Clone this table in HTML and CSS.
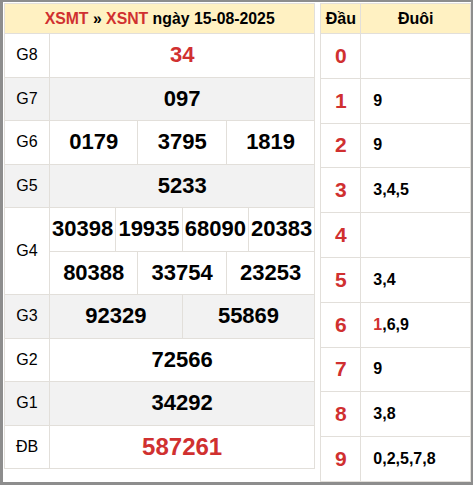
FILE: index.html
```html
<!DOCTYPE html>
<html lang="vi">
<head>
<meta charset="utf-8">
<title>XSNT 15-08-2025</title>
<link rel="stylesheet" href="styles.css">
</head>
<body>
<div class="frame">
  <table class="kq">
    <colgroup>
      <col class="c-label">
      <col span="12">
    </colgroup>
    <thead>
      <tr><th colspan="13" class="title"><span class="red">XSMT</span> » <span class="red">XSNT</span> ngày 15-08-2025</th></tr>
    </thead>
    <tbody>
      <tr><td class="lbl">G8</td><td colspan="12" class="num red">34</td></tr>
      <tr class="alt"><td class="lbl">G7</td><td colspan="12" class="num">097</td></tr>
      <tr><td class="lbl">G6</td><td colspan="4" class="num">0179</td><td colspan="4" class="num">3795</td><td colspan="4" class="num">1819</td></tr>
      <tr class="alt"><td class="lbl">G5</td><td colspan="12" class="num">5233</td></tr>
      <tr><td class="lbl" rowspan="2">G4</td><td colspan="3" class="num">30398</td><td colspan="3" class="num">19935</td><td colspan="3" class="num">68090</td><td colspan="3" class="num">20383</td></tr>
      <tr><td colspan="4" class="num">80388</td><td colspan="4" class="num">33754</td><td colspan="4" class="num">23253</td></tr>
      <tr class="alt"><td class="lbl">G3</td><td colspan="6" class="num">92329</td><td colspan="6" class="num">55869</td></tr>
      <tr><td class="lbl">G2</td><td colspan="12" class="num">72566</td></tr>
      <tr class="alt"><td class="lbl">G1</td><td colspan="12" class="num">34292</td></tr>
      <tr><td class="lbl">ĐB</td><td colspan="12" class="num db red">587261</td></tr>
    </tbody>
  </table>
  <table class="loto">
    <colgroup><col class="c-dau"><col></colgroup>
    <thead><tr><th>Đầu</th><th>Đuôi</th></tr></thead>
    <tbody>
      <tr><td class="dau">0</td><td class="duoi"></td></tr>
      <tr><td class="dau">1</td><td class="duoi">9</td></tr>
      <tr><td class="dau">2</td><td class="duoi">9</td></tr>
      <tr><td class="dau">3</td><td class="duoi">3,4,5</td></tr>
      <tr><td class="dau">4</td><td class="duoi"></td></tr>
      <tr><td class="dau">5</td><td class="duoi">3,4</td></tr>
      <tr><td class="dau">6</td><td class="duoi"><span class="red">1</span>,6,9</td></tr>
      <tr><td class="dau">7</td><td class="duoi">9</td></tr>
      <tr><td class="dau">8</td><td class="duoi">3,8</td></tr>
      <tr><td class="dau">9</td><td class="duoi">0,2,5,7,8</td></tr>
    </tbody>
  </table>
</div>
</body>
</html>
```
FILE: styles.css
```css
html, body {
  margin: 0;
  padding: 0;
}
body {
  background: #8d8d8d;
  font-family: "Liberation Sans", Arial, sans-serif;
  color: #000;
}
.frame {
  box-sizing: border-box;
  margin: 2px 2px 0 3px;
  width: 468px;
  height: 480px;
  background: #fff;
  display: flex;
  align-items: flex-start;
  gap: 5px;
  padding: 1px 0 0 1px;
}
table {
  border-collapse: collapse;
  table-layout: fixed;
}
td, th {
  border: 1px solid #e2dfda;
  padding: 0;
  text-align: center;
}
th {
  background: #fff1c2;
  font-weight: bold;
  font-size: 16px;
  height: 29px;
}
.title {
  font-size: 15.8px;
}
.red {
  color: #d03030;
}
.kq {
  width: 312px;
}
.kq .c-label {
  width: 45px;
}
.kq tbody tr {
  height: 43.5px;
}
.kq tr.alt td {
  background: #f2f2f2;
}
.lbl {
  font-size: 16px;
}
.num {
  font-size: 22px;
  font-weight: bold;
}
.num.db {
  font-size: 24px;
}
.loto {
  width: 151px;
}
.loto .c-dau {
  width: 40px;
}
.loto tbody tr {
  height: 44.8px;
}
.dau {
  color: #d03030;
  font-weight: bold;
  font-size: 21px;
}
.duoi {
  text-align: left;
  padding-left: 12px;
  font-weight: bold;
  font-size: 16px;
}
```
